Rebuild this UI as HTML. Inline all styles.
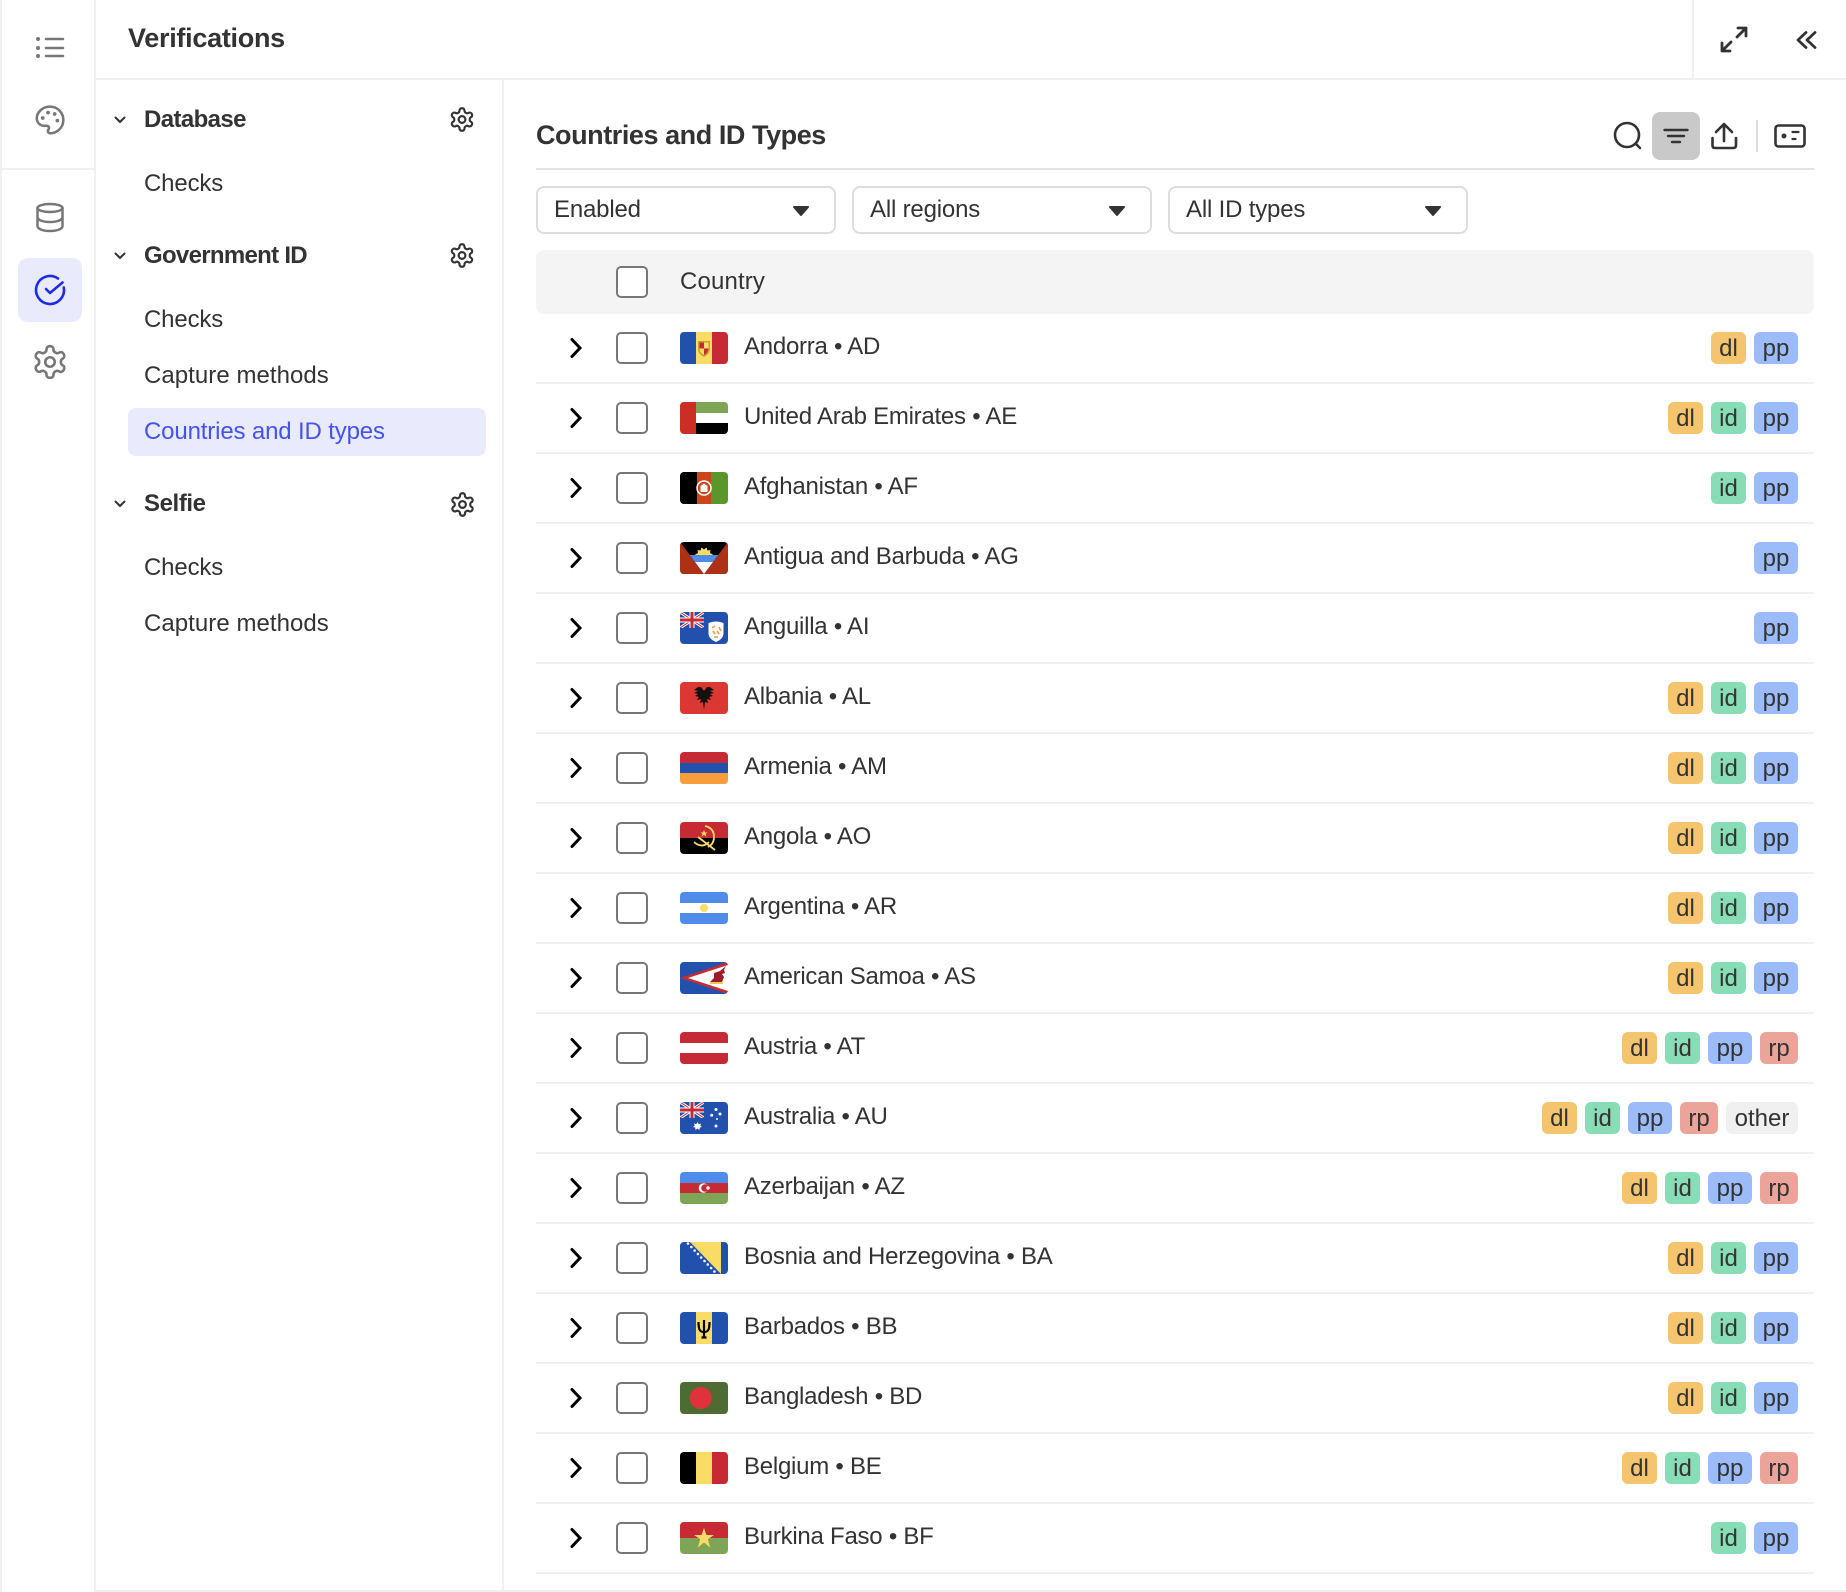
<!DOCTYPE html>
<html lang="en"><head><meta charset="utf-8"><title>Verifications</title>
<style>
*{box-sizing:border-box}
html,body{margin:0;padding:0;background:#fff}
body{position:relative;width:1846px;height:1592px;overflow:hidden;font-family:"Liberation Sans",sans-serif;font-size:24px;letter-spacing:-.25px;color:#333}
.l{position:absolute;background:#f0f0f0}
.t{position:absolute;line-height:32px;white-space:nowrap;letter-spacing:-.15px}
.m{letter-spacing:.05px}
.b{font-weight:bold;letter-spacing:-.6px}
.h{font-weight:bold;font-size:27px;letter-spacing:-.44px}
.s{position:absolute;top:186px;width:300px;height:48px;border:2px solid #ddd;border-radius:8px;padding:6px 0 0 16px;line-height:32px;letter-spacing:-.18px}
.s svg{position:absolute;right:24px;top:17px}
.r{position:absolute;left:536px;width:1278px;height:70px;border-bottom:2px solid #f0f0f0}
.r .c{position:absolute;left:30px;top:16px}
.x{position:absolute;left:80px;top:18px;width:32px;height:32px;border:2px solid #777;border-radius:5px;background:#fff}
.r .f{position:absolute;left:144px;top:18px;border-radius:4px;display:block}
.r .n{position:absolute;left:208px;top:17px;line-height:32px;white-space:nowrap}
.g{position:absolute;right:16px;top:18px;display:flex;gap:8px}
.g span{display:block;height:32px;line-height:33px;border-radius:6px;text-align:center;letter-spacing:0}
.dl{width:35px;background:#f5c46f}.id{width:35px;background:#88dcb6}.pp{width:44px;background:#9bbbf9}.rp{width:38px;background:#eba49a}.ot{width:72px;background:#f0f0f0}
</style></head><body>
<svg width="0" height="0" style="position:absolute"><defs>
<symbol id="gear" viewBox="0 0 24 24"><path d="M12.22 2h-.44a2 2 0 0 0-2 2v.18a2 2 0 0 1-1 1.73l-.43.25a2 2 0 0 1-2 0l-.15-.08a2 2 0 0 0-2.73.73l-.22.38a2 2 0 0 0 .73 2.73l.15.1a2 2 0 0 1 1 1.72v.51a2 2 0 0 1-1 1.74l-.15.09a2 2 0 0 0-.73 2.73l.22.38a2 2 0 0 0 2.73.73l.15-.08a2 2 0 0 1 2 0l.43.25a2 2 0 0 1 1 1.73V20a2 2 0 0 0 2 2h.44a2 2 0 0 0 2-2v-.18a2 2 0 0 1 1-1.73l.43-.25a2 2 0 0 1 2 0l.15.08a2 2 0 0 0 2.73-.73l.22-.39a2 2 0 0 0-.73-2.73l-.15-.08a2 2 0 0 1-1-1.74v-.5a2 2 0 0 1 1-1.74l.15-.09a2 2 0 0 0 .73-2.73l-.22-.38a2 2 0 0 0-2.73-.73l-.15.08a2 2 0 0 1-2 0l-.43-.25a2 2 0 0 1-1-1.73V4a2 2 0 0 0-2-2z"/><circle cx="12" cy="12" r="3"/></symbol>
<symbol id="ch" viewBox="0 0 20 36"><path d="M6 9.500 14 18 6 26.500" fill="none" stroke="#000" stroke-width="3" stroke-linecap="round" stroke-linejoin="miter"/></symbol>
<symbol id="caret" viewBox="0 0 18 12"><path d="M2 2H16L9 10Z" fill="#333" stroke="#333" stroke-width="2" stroke-linejoin="round"/></symbol>
<symbol id="jack" viewBox="0 0 24 16"><rect width="24" height="16" fill="#2251ad"/><path d="M0 0 24 16M24 0 0 16" stroke="#fff" stroke-width="3"/><path d="M0 0 24 16M24 0 0 16" stroke="#c62b35" stroke-width="1"/><path d="M12 0V16M0 8H24" stroke="#fff" stroke-width="5"/><path d="M12 0V16M0 8H24" stroke="#c62b35" stroke-width="3"/></symbol>
</defs></svg>

<div class="l" style="left:0;top:0;width:2px;height:1592px"></div>
<div class="l" style="left:94px;top:0;width:2px;height:1592px"></div>
<div class="l" style="left:2px;top:168px;width:92px;height:2px"></div>
<div class="l" style="left:96px;top:78px;width:1750px;height:2px"></div>
<div class="l" style="left:502px;top:80px;width:2px;height:1512px"></div>
<div class="l" style="left:1692px;top:0;width:2px;height:78px"></div>
<div class="l" style="left:96px;top:1590px;width:1750px;height:2px"></div>
<div style="position:absolute;left:18px;top:258px;width:64px;height:64px;border-radius:10px;background:#e9eafc"></div>
<div style="position:absolute;left:128px;top:408px;width:358px;height:48px;border-radius:8px;background:#e9eafc"></div>
<div style="position:absolute;left:1652px;top:112px;width:48px;height:48px;border-radius:8px;background:#c9c9c9"></div>
<div style="position:absolute;left:536px;top:168px;width:1278px;height:2px;background:#e2e2e2"></div>
<div style="position:absolute;left:536px;top:250px;width:1278px;height:64px;border-radius:8px;background:#f4f4f4"></div>

<svg width="1846" height="400" style="position:absolute;left:0;top:0" fill="none" stroke-linecap="round" stroke-linejoin="round">
<g stroke="#777" stroke-width="2.500"><path d="M46 39H63M46 48H63M46 56H63"/><g fill="#777" stroke="none"><circle cx="38" cy="39" r="2"/><circle cx="38" cy="48" r="2"/><circle cx="38" cy="56" r="2"/></g></g>
<g transform="translate(66 104) scale(-1.330 1.330)" stroke="#777" stroke-width="1.900"><path d="M12 2C6.500 2 2 6.500 2 12s4.500 10 10 10c.926 0 1.648-.746 1.648-1.688 0-.437-.18-.835-.437-1.125-.29-.289-.438-.652-.438-1.125a1.640 1.640 0 0 1 1.668-1.668h1.996c3.051 0 5.555-2.503 5.555-5.554C21.965 6.012 17.461 2 12 2z"/><g fill="#777" stroke="none"><circle cx="13.500" cy="6.500" r="1.400"/><circle cx="17.500" cy="10.500" r="1.400"/><circle cx="8.500" cy="7.500" r="1.400"/><circle cx="6.500" cy="12.500" r="1.400"/></g></g>
<g stroke="#777" stroke-width="2.500"><ellipse cx="50" cy="208" rx="12.500" ry="4"/><path d="M37.500 208V226C37.500 229 43 231 50 231S62.500 229 62.500 226V208M37.500 217C37.500 220 43 222 50 222S62.500 220 62.500 217"/></g>
<g stroke="#1d2be8" stroke-width="2.600"><path d="M63.800 287.500A14 14 0 1 1 58 278.500M46 289 50 293 62.500 282.500"/></g>
<use href="#gear" x="31" y="343" width="38" height="38" stroke="#777" stroke-width="1.650"/>
<use href="#gear" x="448.500" y="106" width="27" height="27" stroke="#333" stroke-width="1.900"/>
<use href="#gear" x="448.500" y="242" width="27" height="27" stroke="#333" stroke-width="1.900"/>
<g stroke="#333" stroke-width="2"><path d="M115.500 117.500 120 122 124.500 117.500M115.500 253.500 120 258 124.500 253.500"/></g>
<g stroke="#333" stroke-width="2.800"><path d="M1737 37 1746 28M1738 28H1746V36M1731 42 1722 51M1722 43V51H1730"/><path d="M1806 32.500 1798 40 1806 47.500M1815 32.500 1807 40 1815 47.500"/></g>
<g stroke="#333" stroke-width="2.600"><circle cx="1627" cy="135" r="12"/><path d="M1636 144 1640 148"/><path d="M1664.500 130H1687.500M1668 136H1684M1672 142H1680" stroke-width="2.400"/><path d="M1724 141V125M1716 132 1724 124 1732 132M1712.500 138V145.500Q1712.500 148 1715 148H1733Q1736 148 1736 145.500V138"/><rect x="1775.500" y="125.500" width="29" height="21" rx="3"/><path d="M1792.500 132H1798.500M1792.500 139H1795.500" stroke-width="2.200"/></g>
<circle cx="1784" cy="136" r="2.500" fill="#333"/>
<path d="M1757 120V152" stroke="#ddd" stroke-width="2" stroke-linecap="butt"/>
</svg>
<svg width="30" height="20" style="position:absolute;left:105px;top:494px" fill="none"><path d="M10.500 7.500 15 12 19.500 7.500" stroke="#333" stroke-width="2" stroke-linecap="round" stroke-linejoin="round"/></svg>
<svg width="27" height="27" style="position:absolute;left:448.500px;top:491px" fill="none" stroke="#333" stroke-width="1.900"><use href="#gear"/></svg>

<div class="t h" style="left:128px;top:22px;letter-spacing:-.28px">Verifications</div>
<div class="t b" style="left:144px;top:104px">Database</div>
<div class="t" style="left:144px;top:168px">Checks</div>
<div class="t b" style="left:144px;top:240px;letter-spacing:-.7px">Government ID</div>
<div class="t" style="left:144px;top:304px">Checks</div>
<div class="t m" style="left:144px;top:360px">Capture methods</div>
<div class="t" style="left:144px;top:416px;color:#4353ef">Countries and ID types</div>
<div class="t b" style="left:144px;top:488px;letter-spacing:-.4px">Selfie</div>
<div class="t" style="left:144px;top:552px">Checks</div>
<div class="t m" style="left:144px;top:608px">Capture methods</div>
<div class="t h" style="left:536px;top:119px">Countries and ID Types</div>

<div class="s" style="left:536px">Enabled<svg width="18" height="12"><use href="#caret"/></svg></div>
<div class="s" style="left:852px">All regions<svg width="18" height="12"><use href="#caret"/></svg></div>
<div class="s" style="left:1168px">All ID types<svg width="18" height="12"><use href="#caret"/></svg></div>

<div class="x" style="left:616px;top:266px"></div>
<div class="t" style="left:680px;top:266px;letter-spacing:.15px">Country</div>

<div class="r" style="top:314px"><svg class="c" width="20" height="36"><use href="#ch"/></svg><div class="x"></div>
<svg class="f" width="48" height="32" viewBox="0 0 48 32"><rect width="16" height="32" fill="#2251ad"/><rect x="16" width="16" height="32" fill="#f9dc65"/><rect x="32" width="16" height="32" fill="#c62b35"/><path d="M18 9H30V17Q30 22 24 25 18 22 18 17Z" fill="#c9a22f"/><path d="M19.500 10.500H24V16.500H19.500Z" fill="#c62b35"/><path d="M24 10.500H28.500V16.500H24Z" fill="#f9dc65"/><path d="M24 16.500H28.500Q28 21 24 23Z" fill="#c62b35"/><path d="M19.500 16.500H24V23Q20 21 19.500 16.500Z" fill="#f9dc65"/></svg>
<div class="n">Andorra • AD</div><div class="g"><span class="dl">dl</span><span class="pp">pp</span></div></div>

<div class="r" style="top:384px"><svg class="c" width="20" height="36"><use href="#ch"/></svg><div class="x"></div>
<svg class="f" width="48" height="32" viewBox="0 0 48 32"><rect x="16" width="32" height="11" fill="#7ea556"/><rect x="16" y="11" width="32" height="10" fill="#fff"/><rect x="16" y="21" width="32" height="11" fill="#000"/><rect width="16" height="32" fill="#cb2e25"/></svg>
<div class="n">United Arab Emirates • AE</div><div class="g"><span class="dl">dl</span><span class="id">id</span><span class="pp">pp</span></div></div>

<div class="r" style="top:454px"><svg class="c" width="20" height="36"><use href="#ch"/></svg><div class="x"></div>
<svg class="f" width="48" height="32" viewBox="0 0 48 32"><rect width="17" height="32" fill="#000"/><rect x="17" width="14" height="32" fill="#c8471f"/><rect x="31" width="17" height="32" fill="#5b962b"/><circle cx="24" cy="16" r="7" fill="none" stroke="#fff" stroke-width="1.500"/><path d="M20.500 20V14L24 11.500 27.500 14V20Z" fill="#fff"/></svg>
<div class="n">Afghanistan • AF</div><div class="g"><span class="id">id</span><span class="pp">pp</span></div></div>

<div class="r" style="top:524px"><svg class="c" width="20" height="36"><use href="#ch"/></svg><div class="x"></div>
<svg class="f" width="48" height="32" viewBox="0 0 48 32"><rect width="48" height="32" fill="#000"/><path d="M0 0 24 32H0ZM48 0 24 32H48Z" fill="#ad3215"/><path d="M9.750 13H38.250L33 20H15Z" fill="#4f8cea"/><path d="M15 20H33L24 32Z" fill="#fff"/><path d="M14.500 13 18 11 17.500 8 20.500 8.500 21.500 5.500 24 7.500 26.500 5.500 27.500 8.500 30.500 8 30 11 33.500 13Z" fill="#f9dc65"/></svg>
<div class="n">Antigua and Barbuda • AG</div><div class="g"><span class="pp">pp</span></div></div>

<div class="r" style="top:594px"><svg class="c" width="20" height="36"><use href="#ch"/></svg><div class="x"></div>
<svg class="f" width="48" height="32" viewBox="0 0 48 32"><rect width="48" height="32" fill="#2251ad"/><use href="#jack" width="24" height="16"/><path d="M28.500 11Q36 8 43.500 11V21Q43.500 27 36 30 28.500 27 28.500 21Z" fill="#fff"/><path d="M32 16 35 14M39 15 41 19M34 25 38 25M33 19 35 22M39 22 37 19" stroke="#ec9a3c" stroke-width="1.600" fill="none"/></svg>
<div class="n">Anguilla • AI</div><div class="g"><span class="pp">pp</span></div></div>

<div class="r" style="top:664px"><svg class="c" width="20" height="36"><use href="#ch"/></svg><div class="x"></div>
<svg class="f" width="48" height="32" viewBox="0 0 48 32"><rect width="48" height="32" fill="#db3834"/><path d="M24 9 21 5H18L14 8 18 9 14 11 18 12 15 14 19 15 17 18 21 17 20 21 23 20 24 28 25 20 28 21 27 17 31 18 29 15 33 14 30 12 34 11 30 9 34 8 30 5H27Z" fill="#111"/></svg>
<div class="n">Albania • AL</div><div class="g"><span class="dl">dl</span><span class="id">id</span><span class="pp">pp</span></div></div>

<div class="r" style="top:734px"><svg class="c" width="20" height="36"><use href="#ch"/></svg><div class="x"></div>
<svg class="f" width="48" height="32" viewBox="0 0 48 32"><rect width="48" height="11" fill="#c62b35"/><rect y="11" width="48" height="10" fill="#2251ad"/><rect y="21" width="48" height="11" fill="#f59e3b"/></svg>
<div class="n">Armenia • AM</div><div class="g"><span class="dl">dl</span><span class="id">id</span><span class="pp">pp</span></div></div>

<div class="r" style="top:804px"><svg class="c" width="20" height="36"><use href="#ch"/></svg><div class="x"></div>
<svg class="f" width="48" height="32" viewBox="0 0 48 32"><rect width="48" height="16" fill="#c62b35"/><rect y="16" width="48" height="16" fill="#000"/><path d="M25 4Q34 6 34 15 34 22 28 25" fill="none" stroke="#f9dc65" stroke-width="1.800"/><path d="M14 20Q22 27 29 20M18 15 35 28" fill="none" stroke="#f9dc65" stroke-width="1.800"/><path d="M24 8 25 10.500 27.500 10.500 25.500 12 26.500 14.500 24 13 21.500 14.500 22.500 12 20.500 10.500 23 10.500Z" fill="#f9dc65"/></svg>
<div class="n">Angola • AO</div><div class="g"><span class="dl">dl</span><span class="id">id</span><span class="pp">pp</span></div></div>

<div class="r" style="top:874px"><svg class="c" width="20" height="36"><use href="#ch"/></svg><div class="x"></div>
<svg class="f" width="48" height="32" viewBox="0 0 48 32"><rect width="48" height="32" fill="#4f8cea"/><rect y="11" width="48" height="10" fill="#fff"/><circle cx="24" cy="16" r="4" fill="#f9dc65"/></svg>
<div class="n">Argentina • AR</div><div class="g"><span class="dl">dl</span><span class="id">id</span><span class="pp">pp</span></div></div>

<div class="r" style="top:944px"><svg class="c" width="20" height="36"><use href="#ch"/></svg><div class="x"></div>
<svg class="f" width="48" height="32" viewBox="0 0 48 32"><rect width="48" height="32" fill="#2251ad"/><path d="M0 16 48 0V32Z" fill="#c62b35"/><path d="M8 16 48 3V29Z" fill="#fff"/><path d="M30 20 34 16 34 11 40 9 46 4 44 8 45 11 42 12 44 15 42 20Z" fill="#9c1c2a"/><rect x="30" y="20" width="13" height="2" fill="#f0c94f"/></svg>
<div class="n">American Samoa • AS</div><div class="g"><span class="dl">dl</span><span class="id">id</span><span class="pp">pp</span></div></div>

<div class="r" style="top:1014px"><svg class="c" width="20" height="36"><use href="#ch"/></svg><div class="x"></div>
<svg class="f" width="48" height="32" viewBox="0 0 48 32"><rect width="48" height="32" fill="#c62b35"/><rect y="11" width="48" height="10" fill="#fff"/></svg>
<div class="n">Austria • AT</div><div class="g"><span class="dl">dl</span><span class="id">id</span><span class="pp">pp</span><span class="rp">rp</span></div></div>

<div class="r" style="top:1084px"><svg class="c" width="20" height="36"><use href="#ch"/></svg><div class="x"></div>
<svg class="f" width="48" height="32" viewBox="0 0 48 32"><rect width="48" height="32" fill="#2251ad"/><use href="#jack" width="24" height="16"/><path d="M17.500 20 18.700 22.300 21 21.500 20.300 23.800 22 25 19.700 25.500 19.500 28 17.500 26.500 15.500 28 15.300 25.500 13 25 14.700 23.800 14 21.500 16.300 22.300Z" fill="#fff"/><g fill="#fff"><circle cx="36" cy="7.500" r="1.500"/><circle cx="31.700" cy="13.300" r="1.500"/><circle cx="40" cy="12" r="1.500"/><circle cx="37" cy="17" r="1"/><circle cx="36" cy="24" r="1.500"/></g></svg>
<div class="n">Australia • AU</div><div class="g"><span class="dl">dl</span><span class="id">id</span><span class="pp">pp</span><span class="rp">rp</span><span class="ot">other</span></div></div>

<div class="r" style="top:1154px"><svg class="c" width="20" height="36"><use href="#ch"/></svg><div class="x"></div>
<svg class="f" width="48" height="32" viewBox="0 0 48 32"><rect width="48" height="11" fill="#4f8cea"/><rect y="11" width="48" height="10" fill="#c62b35"/><rect y="21" width="48" height="11" fill="#7ea556"/><circle cx="23.500" cy="16" r="4.800" fill="#fff"/><circle cx="25" cy="16" r="3.800" fill="#c62b35"/><circle cx="28" cy="16" r="1.700" fill="#fff"/></svg>
<div class="n">Azerbaijan • AZ</div><div class="g"><span class="dl">dl</span><span class="id">id</span><span class="pp">pp</span><span class="rp">rp</span></div></div>

<div class="r" style="top:1224px"><svg class="c" width="20" height="36"><use href="#ch"/></svg><div class="x"></div>
<svg class="f" width="48" height="32" viewBox="0 0 48 32"><rect width="48" height="32" fill="#2251ad"/><path d="M10 0H41V32Z" fill="#f9dc65"/><g fill="#fff"><circle cx="8" cy="1.500" r="1.300"/><circle cx="11.300" cy="5" r="1.300"/><circle cx="14.600" cy="8.500" r="1.300"/><circle cx="17.900" cy="12" r="1.300"/><circle cx="21.200" cy="15.500" r="1.300"/><circle cx="24.500" cy="19" r="1.300"/><circle cx="27.800" cy="22.500" r="1.300"/><circle cx="31.100" cy="26" r="1.300"/><circle cx="34.400" cy="29.500" r="1.300"/></g></svg>
<div class="n">Bosnia and Herzegovina • BA</div><div class="g"><span class="dl">dl</span><span class="id">id</span><span class="pp">pp</span></div></div>

<div class="r" style="top:1294px"><svg class="c" width="20" height="36"><use href="#ch"/></svg><div class="x"></div>
<svg class="f" width="48" height="32" viewBox="0 0 48 32"><rect width="48" height="32" fill="#2251ad"/><rect x="16" width="16" height="32" fill="#f9dc65"/><path d="M24 8V26M18.500 10C18.500 18 20 20 24 20S29.500 18 29.500 10M21.500 25.500H26.500" fill="none" stroke="#000" stroke-width="2.200"/></svg>
<div class="n">Barbados • BB</div><div class="g"><span class="dl">dl</span><span class="id">id</span><span class="pp">pp</span></div></div>

<div class="r" style="top:1364px"><svg class="c" width="20" height="36"><use href="#ch"/></svg><div class="x"></div>
<svg class="f" width="48" height="32" viewBox="0 0 48 32"><rect width="48" height="32" fill="#4f6b34"/><circle cx="20.700" cy="16" r="11" fill="#e0323c"/></svg>
<div class="n">Bangladesh • BD</div><div class="g"><span class="dl">dl</span><span class="id">id</span><span class="pp">pp</span></div></div>

<div class="r" style="top:1434px"><svg class="c" width="20" height="36"><use href="#ch"/></svg><div class="x"></div>
<svg class="f" width="48" height="32" viewBox="0 0 48 32"><rect width="16" height="32" fill="#000"/><rect x="16" width="16" height="32" fill="#f9dc65"/><rect x="32" width="16" height="32" fill="#c62b35"/></svg>
<div class="n">Belgium • BE</div><div class="g"><span class="dl">dl</span><span class="id">id</span><span class="pp">pp</span><span class="rp">rp</span></div></div>

<div class="r" style="top:1504px"><svg class="c" width="20" height="36"><use href="#ch"/></svg><div class="x"></div>
<svg class="f" width="48" height="32" viewBox="0 0 48 32"><rect width="48" height="16" fill="#c62b35"/><rect y="16" width="48" height="16" fill="#7ea556"/><path d="M24 6 26.400 13H34L27.800 17.300 30.200 25.500 24 20.500 17.800 25.500 20.200 17.300 14 13H21.600Z" fill="#f9dc65"/></svg>
<div class="n">Burkina Faso • BF</div><div class="g"><span class="id">id</span><span class="pp">pp</span></div></div>
</body></html>
